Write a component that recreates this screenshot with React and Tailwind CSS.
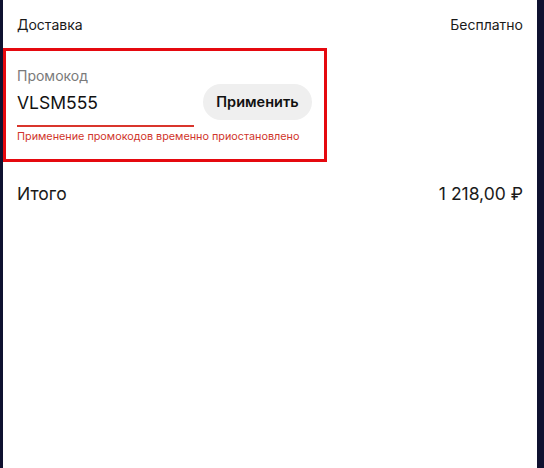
import React from 'react';

const font = { fontFamily: 'Inter, "Noto Sans", sans-serif' };

const PromoBlock = ({ code, error }) => (
  <div className="w-[324px] h-[114px] border-[3px] border-[#e5090f] pl-[11px] pr-[12px] pt-[15px]">
    <div className="text-[14px] leading-[20px] text-[#7a7a7a]">Промокод</div>
    <div className="flex items-start justify-between">
      <div className="w-[177px] pt-[5px]">
        <div className="text-[17.5px] leading-[24px] text-[#111]">{code}</div>
        <div className="mt-[10px] h-[2px] bg-[#d9352c]" />
      </div>
      <button className="mt-[-2px] h-[36px] w-[109px] rounded-full bg-[#efefef] text-[14.5px] font-semibold text-[#111]">
        Применить
      </button>
    </div>
    <div className="mt-[3px] text-[10.8px] leading-[14px] text-[#d0352b]">{error}</div>
  </div>
);

export default function App() {
  return (
    <div className="flex w-[544px] h-[468px] bg-[#0f1130]" style={font}>
      <div className="w-[3px]" />
      <div className="flex-1 bg-white flex flex-col">
        <div className="flex justify-between px-[14px] pt-[15px] h-[48px] text-[14px] leading-[20px] text-[#1a1a1a]">
          <span>Доставка</span>
          <span>Бесплатно</span>
        </div>
        <PromoBlock code="VLSM555" error="Применение промокодов временно приостановлено" />
        <div className="flex justify-between px-[14px] pt-[20px] text-[17.5px] leading-[24px] text-[#1a1a1a]">
          <span>Итого</span>
          <span>1 218,00 ₽</span>
        </div>
      </div>
      <div className="w-[7px]" />
    </div>
  );
}
